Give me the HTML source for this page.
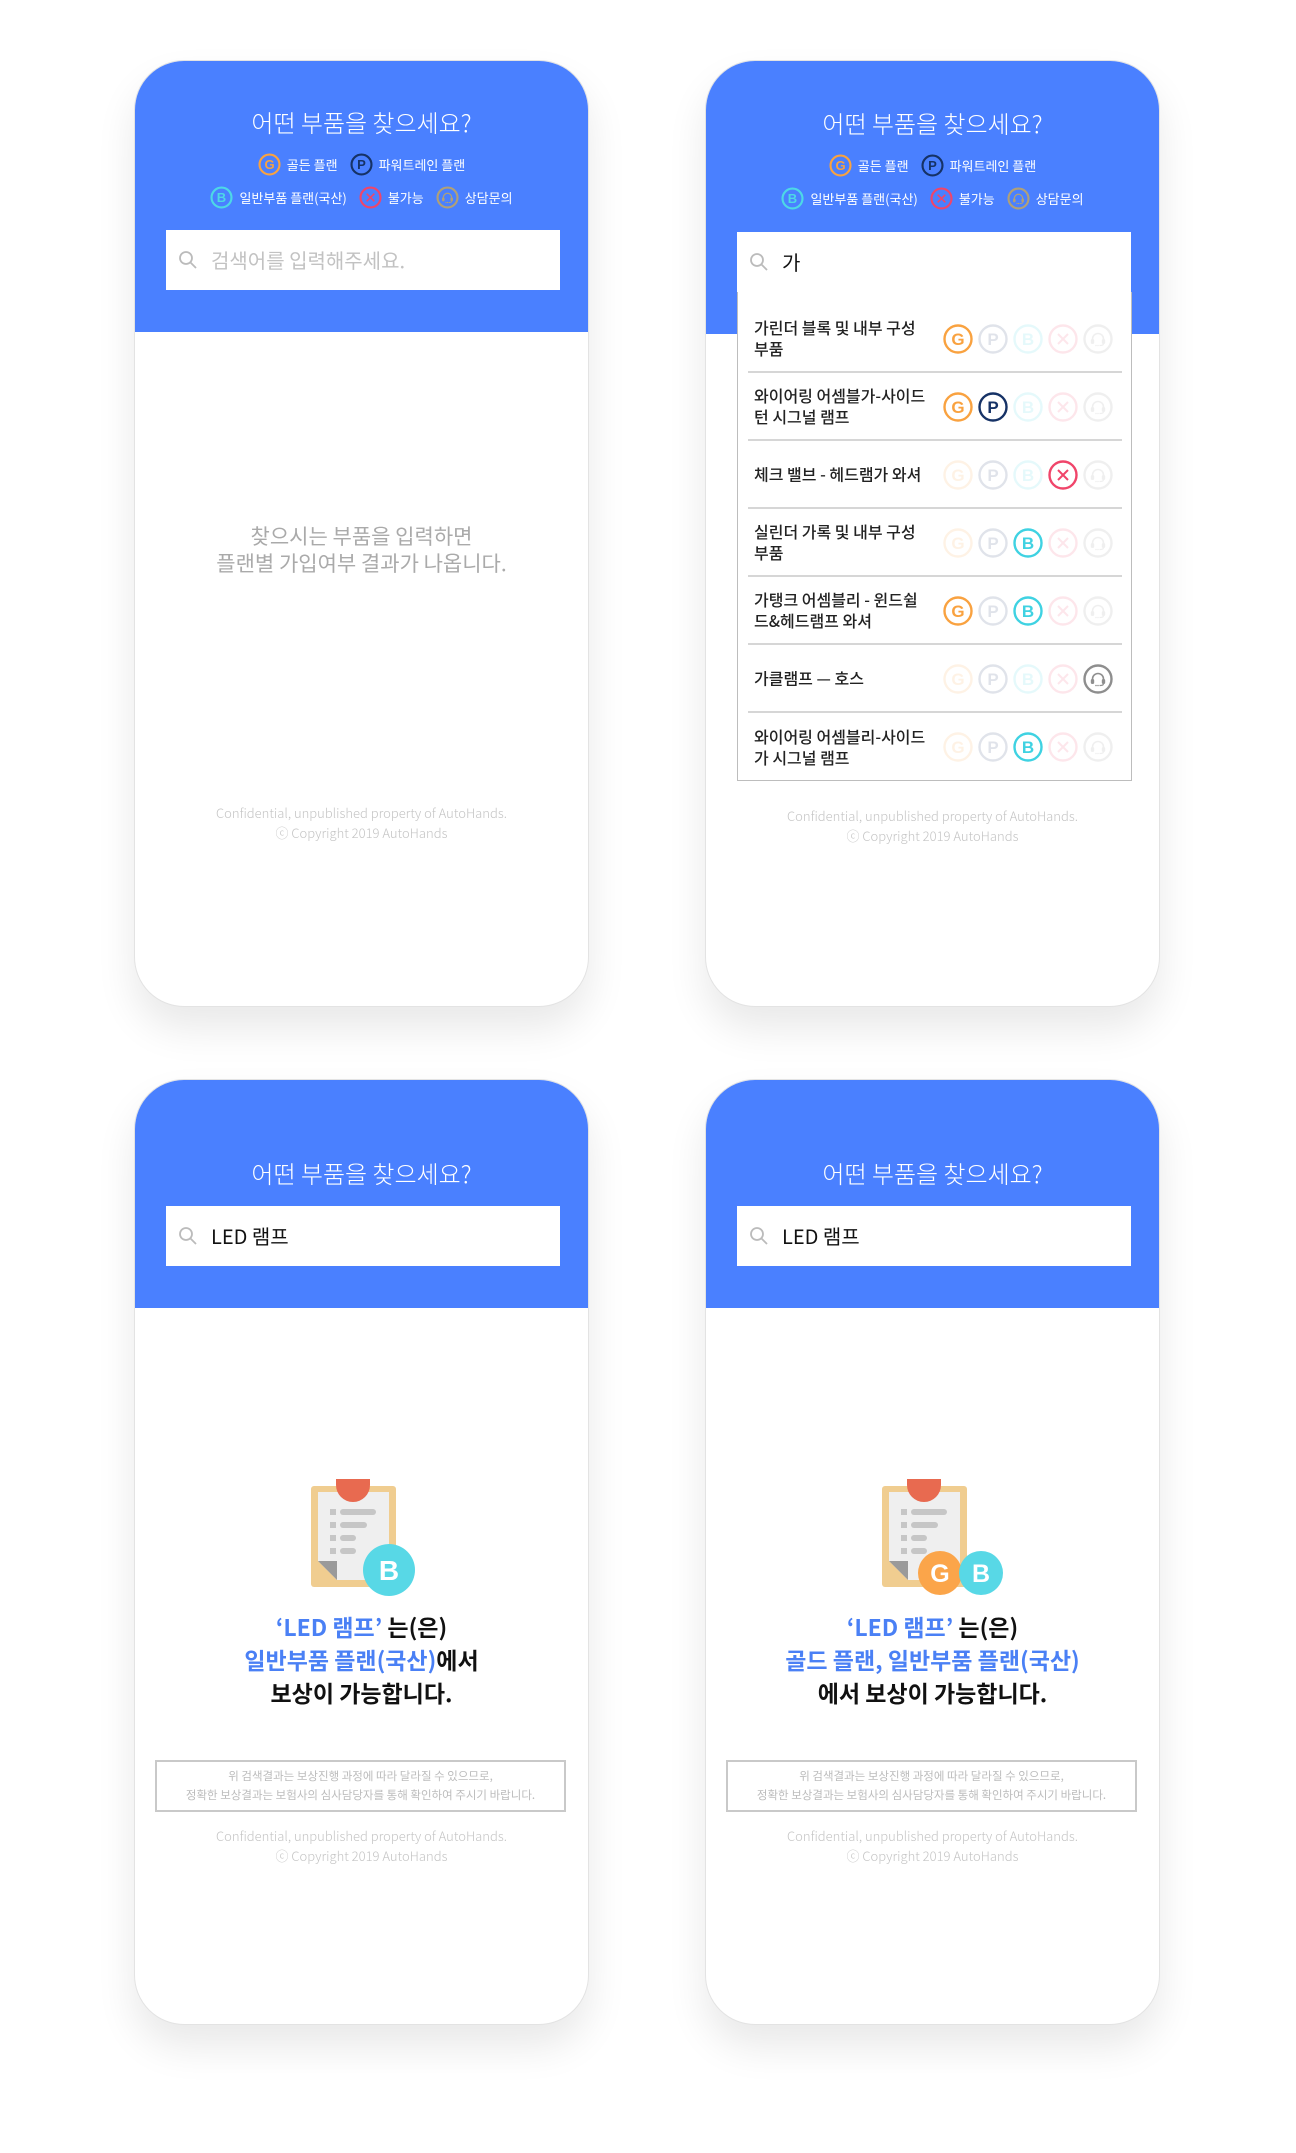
<!DOCTYPE html>
<html><head><meta charset="utf-8">
<style>
*{margin:0;padding:0;box-sizing:border-box}
body{width:1296px;height:2153px;background:#fff;position:relative;overflow:hidden;font-family:"Liberation Sans","Noto Sans CJK KR",sans-serif}
.ph{position:absolute;width:455px;height:947px;border-radius:50px;background:#fff;border:1px solid #e3e3e3;box-shadow:0 22px 40px rgba(0,0,0,0.09);overflow:hidden}
.hd{position:absolute;left:0;top:0;width:100%;background:#4a80ff}
.ttl{position:absolute;left:0;width:100%;text-align:center;color:#fff;font-size:24px;font-weight:300;line-height:30px;font-family:"Noto Sans CJK KR",sans-serif}
.lg{position:absolute;left:0;width:100%;display:flex;justify-content:center;align-items:center;color:#fff;font-size:13px;font-family:"Noto Sans CJK KR",sans-serif;height:24px}
.lg svg{margin-right:6px}
.lg span{margin-right:12px}
.sb{position:absolute;left:31px;width:394px;background:#fff}
.sb svg{position:absolute;left:12px;top:50%;margin-top:-10px}
.sb .t{position:absolute;left:45px;top:0;font-size:20px;font-family:"Noto Sans CJK KR",sans-serif}
.c{position:absolute;left:0;width:100%;text-align:center;font-family:"Noto Sans CJK KR",sans-serif}
.ft{color:#c4c4c4;font-size:13px;line-height:20px;font-weight:300}
.list{position:absolute;left:31px;top:231px;width:395px;height:489px;border:1px solid #bdbdbd;border-top:none;background:#fff}
.row{position:absolute;left:10px;width:374px;height:68px;border-bottom:2px solid #d6d6d6}
.row .l{position:absolute;left:6px;top:50%;transform:translateY(-50%);font-size:16px;line-height:21px;color:#222;font-family:"Noto Sans CJK KR",sans-serif;font-weight:500}
.row .ic{position:absolute;left:195px;top:19px;display:flex}
.row .ic svg{margin-right:5px}
.res{font-size:23px;line-height:33px;font-weight:700;color:#111}
.bl{color:#4a80f5}
.nt{position:absolute;left:20px;width:411px;height:52px;border:2px solid #c9c9c9;text-align:center;color:#bcbcbc;font-size:11.5px;line-height:19px;padding-top:5px;font-family:"Noto Sans CJK KR",sans-serif}
</style></head><body>

<svg width="0" height="0" style="position:absolute">
<defs>
<g id="hs"><path d="M9.5 17v-2a5.5 5.5 0 0 1 11 0v2" fill="none" stroke-width="1.6"/><rect x="8.3" y="15.5" width="2.4" height="4" rx="1"/><rect x="19.3" y="15.5" width="2.4" height="4" rx="1"/><path d="M20.5 19.5q0 2-3 2h-1" fill="none" stroke-width="1.2"/><circle cx="13" cy="21.5" r=".8" stroke="none"/><circle cx="15" cy="21.5" r=".8" stroke="none"/></g>
</defs>
</svg>

<!-- Phone 1 -->
<div class="ph" style="left:134px;top:60px">
 <div class="hd" style="height:271px"></div>
 <div class="ttl" style="top:46px">어떤 부품을 찾으세요?</div>
 <div class="lg" style="top:91px">
  <svg width="23" height="23" viewBox="0 0 30 30"><circle cx="15" cy="15" r="13" fill="none" stroke="#f9a240" stroke-width="2.8"/><text x="15" y="21" text-anchor="middle" font-size="17" font-weight="bold" fill="#f9a240" font-family="Liberation Sans">G</text></svg><span>골든 플랜</span>
  <svg width="23" height="23" viewBox="0 0 30 30"><circle cx="15" cy="15" r="13" fill="none" stroke="#163266" stroke-width="2.8"/><text x="15" y="21" text-anchor="middle" font-size="17" font-weight="bold" fill="#163266" font-family="Liberation Sans">P</text></svg><span style="margin-right:0">파워트레인 플랜</span>
 </div>
 <div class="lg" style="top:124px">
  <svg width="23" height="23" viewBox="0 0 30 30"><circle cx="15" cy="15" r="13" fill="none" stroke="#4dd8e6" stroke-width="2.8"/><text x="15" y="21" text-anchor="middle" font-size="17" font-weight="bold" fill="#4dd8e6" font-family="Liberation Sans">B</text></svg><span>일반부품 플랜(국산)</span>
  <svg width="23" height="23" viewBox="0 0 30 30"><circle cx="15" cy="15" r="13" fill="none" stroke="#f0456a" stroke-width="2.8"/><path d="M10 10L20 20M20 10L10 20" stroke="#f0456a" stroke-width="2"/></svg><span>불가능</span>
  <svg width="23" height="23" viewBox="0 0 30 30"><circle cx="15" cy="15" r="13" fill="none" stroke="#b0a078" stroke-width="2.8"/><use href="#hs" stroke="#b0a078" fill="#b0a078"/></svg><span style="margin-right:0">상담문의</span>
 </div>
 <div class="sb" style="top:169px;height:60px">
  <svg width="20" height="20" viewBox="0 0 20 20"><circle cx="8" cy="8" r="6" fill="none" stroke="#bbb" stroke-width="1.8"/><path d="M12.5 12.5L18 18" stroke="#bbb" stroke-width="1.8"/></svg>
  <div class="t" style="line-height:60px;color:#c2c2c2">검색어를 입력해주세요.</div>
 </div>
 <div class="c" style="top:462px;color:#aaa;font-size:21px;line-height:27px">찾으시는 부품을 입력하면<br>플랜별 가입여부 결과가 나옵니다.</div>
 <div class="c ft" style="top:742px">Confidential, unpublished property of AutoHands.<br>ⓒ Copyright 2019 AutoHands</div>
</div>

<!-- Phone 2 -->
<div class="ph" style="left:705px;top:60px">
 <div class="hd" style="height:273px"></div>
 <div class="ttl" style="top:47px">어떤 부품을 찾으세요?</div>
 <div class="lg" style="top:92px">
  <svg width="23" height="23" viewBox="0 0 30 30"><circle cx="15" cy="15" r="13" fill="none" stroke="#f9a240" stroke-width="2.8"/><text x="15" y="21" text-anchor="middle" font-size="17" font-weight="bold" fill="#f9a240" font-family="Liberation Sans">G</text></svg><span>골든 플랜</span>
  <svg width="23" height="23" viewBox="0 0 30 30"><circle cx="15" cy="15" r="13" fill="none" stroke="#163266" stroke-width="2.8"/><text x="15" y="21" text-anchor="middle" font-size="17" font-weight="bold" fill="#163266" font-family="Liberation Sans">P</text></svg><span style="margin-right:0">파워트레인 플랜</span>
 </div>
 <div class="lg" style="top:125px">
  <svg width="23" height="23" viewBox="0 0 30 30"><circle cx="15" cy="15" r="13" fill="none" stroke="#4dd8e6" stroke-width="2.8"/><text x="15" y="21" text-anchor="middle" font-size="17" font-weight="bold" fill="#4dd8e6" font-family="Liberation Sans">B</text></svg><span>일반부품 플랜(국산)</span>
  <svg width="23" height="23" viewBox="0 0 30 30"><circle cx="15" cy="15" r="13" fill="none" stroke="#f0456a" stroke-width="2.8"/><path d="M10 10L20 20M20 10L10 20" stroke="#f0456a" stroke-width="2"/></svg><span>불가능</span>
  <svg width="23" height="23" viewBox="0 0 30 30"><circle cx="15" cy="15" r="13" fill="none" stroke="#b0a078" stroke-width="2.8"/><use href="#hs" stroke="#b0a078" fill="#b0a078"/></svg><span style="margin-right:0">상담문의</span>
 </div>
 <div class="sb" style="top:171px;height:60px">
  <svg width="20" height="20" viewBox="0 0 20 20"><circle cx="8" cy="8" r="6" fill="none" stroke="#bbb" stroke-width="1.8"/><path d="M12.5 12.5L18 18" stroke="#bbb" stroke-width="1.8"/></svg>
  <div class="t" style="line-height:60px;color:#111">가</div>
 </div>
 <div class="list">
  <div class="row" style="top:13px"><div class="l">가린더 블록 및 내부 구성<br>부품</div><div class="ic" id="r1"></div></div>
  <div class="row" style="top:81px"><div class="l">와이어링 어셈블가-사이드<br>턴 시그널 램프</div><div class="ic" id="r2"></div></div>
  <div class="row" style="top:149px"><div class="l">체크 밸브 - 헤드램가 와셔</div><div class="ic" id="r3"></div></div>
  <div class="row" style="top:217px"><div class="l">실린더 가록 및 내부 구성<br>부품</div><div class="ic" id="r4"></div></div>
  <div class="row" style="top:285px"><div class="l">가탱크 어셈블리 - 윈드쉴<br>드&amp;헤드램프 와셔</div><div class="ic" id="r5"></div></div>
  <div class="row" style="top:353px"><div class="l">가클램프 — 호스</div><div class="ic" id="r6"></div></div>
  <div class="row" style="top:421px;border-bottom:none"><div class="l">와이어링 어셈블리-사이드<br>가 시그널 램프</div><div class="ic" id="r7"></div></div>
 </div>
 <div class="c ft" style="top:745px">Confidential, unpublished property of AutoHands.<br>ⓒ Copyright 2019 AutoHands</div>
</div>

<!-- Phone 3 -->
<div class="ph" style="left:134px;top:1079px;height:946px">
 <div class="hd" style="height:228px"></div>
 <div class="ttl" style="top:78px">어떤 부품을 찾으세요?</div>
 <div class="sb" style="top:126px;height:60px">
  <svg width="20" height="20" viewBox="0 0 20 20"><circle cx="8" cy="8" r="6" fill="none" stroke="#bbb" stroke-width="1.8"/><path d="M12.5 12.5L18 18" stroke="#bbb" stroke-width="1.8"/></svg>
  <div class="t" style="line-height:60px;color:#111">LED 램프</div>
 </div>
 <svg style="position:absolute;left:176px;top:399px" width="112" height="118" viewBox="0 0 112 118">
  <rect x="0" y="7" width="85" height="101" rx="3" fill="#f0cd90"/>
  <path d="M7 13H78V101H26L7 82Z" fill="#efefef"/>
  <path d="M7 82L26 82L26 101Z" fill="#9a9a9a"/>
  <path d="M25 0H59V6A17 17 0 0 1 25 6Z" fill="#e86a50"/>
  <rect x="19" y="30" width="6" height="6" fill="#c6c6c6"/><rect x="29" y="30" width="36" height="6" rx="3" fill="#c6c6c6"/>
  <rect x="19" y="43" width="6" height="6" fill="#c6c6c6"/><rect x="29" y="43" width="27" height="6" rx="3" fill="#c6c6c6"/>
  <rect x="19" y="56" width="6" height="6" fill="#c6c6c6"/><rect x="29" y="56" width="16" height="6" rx="3" fill="#c6c6c6"/>
  <rect x="19" y="69" width="6" height="6" fill="#c6c6c6"/><rect x="29" y="69" width="16" height="6" rx="3" fill="#c6c6c6"/>
  <circle cx="78" cy="91" r="26" fill="#58d8e6"/>
  <text x="78" y="101" text-anchor="middle" font-size="28" font-weight="bold" fill="#fff" font-family="Liberation Sans">B</text>
 </svg>
 <div class="c res" style="top:530px"><span class="bl">‘LED 램프’</span> 는(은)<br><span class="bl">일반부품 플랜(국산)</span>에서<br>보상이 가능합니다.</div>
 <div class="nt" style="top:680px">위 검색결과는 보상진행 과정에 따라 달라질 수 있으므로,<br>정확한 보상결과는 보험사의 심사담당자를 통해 확인하여 주시기 바랍니다.</div>
 <div class="c ft" style="top:746px">Confidential, unpublished property of AutoHands.<br>ⓒ Copyright 2019 AutoHands</div>
</div>

<!-- Phone 4 -->
<div class="ph" style="left:705px;top:1079px;height:946px">
 <div class="hd" style="height:228px"></div>
 <div class="ttl" style="top:78px">어떤 부품을 찾으세요?</div>
 <div class="sb" style="top:126px;height:60px">
  <svg width="20" height="20" viewBox="0 0 20 20"><circle cx="8" cy="8" r="6" fill="none" stroke="#bbb" stroke-width="1.8"/><path d="M12.5 12.5L18 18" stroke="#bbb" stroke-width="1.8"/></svg>
  <div class="t" style="line-height:60px;color:#111">LED 램프</div>
 </div>
 <svg style="position:absolute;left:176px;top:399px" width="130" height="120" viewBox="0 0 130 120">
  <rect x="0" y="7" width="85" height="101" rx="3" fill="#f0cd90"/>
  <path d="M7 13H78V101H26L7 82Z" fill="#efefef"/>
  <path d="M7 82L26 82L26 101Z" fill="#9a9a9a"/>
  <path d="M25 0H59V6A17 17 0 0 1 25 6Z" fill="#e86a50"/>
  <rect x="19" y="30" width="6" height="6" fill="#c6c6c6"/><rect x="29" y="30" width="36" height="6" rx="3" fill="#c6c6c6"/>
  <rect x="19" y="43" width="6" height="6" fill="#c6c6c6"/><rect x="29" y="43" width="27" height="6" rx="3" fill="#c6c6c6"/>
  <rect x="19" y="56" width="6" height="6" fill="#c6c6c6"/><rect x="29" y="56" width="16" height="6" rx="3" fill="#c6c6c6"/>
  <rect x="19" y="69" width="6" height="6" fill="#c6c6c6"/><rect x="29" y="69" width="16" height="6" rx="3" fill="#c6c6c6"/>
  <circle cx="58" cy="94" r="22" fill="#fba54a"/>
  <text x="58" y="103" text-anchor="middle" font-size="25" font-weight="bold" fill="#fff" font-family="Liberation Sans">G</text>
  <circle cx="99" cy="94" r="22" fill="#58d8e6"/>
  <text x="99" y="103" text-anchor="middle" font-size="25" font-weight="bold" fill="#fff" font-family="Liberation Sans">B</text>
 </svg>
 <div class="c res" style="top:530px"><span class="bl">‘LED 램프’</span> 는(은)<br><span class="bl">골드 플랜, 일반부품 플랜(국산)</span><br>에서 보상이 가능합니다.</div>
 <div class="nt" style="top:680px">위 검색결과는 보상진행 과정에 따라 달라질 수 있으므로,<br>정확한 보상결과는 보험사의 심사담당자를 통해 확인하여 주시기 바랍니다.</div>
 <div class="c ft" style="top:746px">Confidential, unpublished property of AutoHands.<br>ⓒ Copyright 2019 AutoHands</div>
</div>

<script>
var C={G:'#f9a240',P:'#163266',B:'#3fd2e2',X:'#f0456a',H:'#8e8e8e'};
function ic(k,on){var c=C[k],o=on?1:0.13,s='<svg width="30" height="30" viewBox="0 0 30 30" style="opacity:'+o+'"><circle cx="15" cy="15" r="13.5" fill="none" stroke="'+c+'" stroke-width="2.4"/>';
if(k=='X')s+='<path d="M10 10L20 20M20 10L10 20" stroke="'+c+'" stroke-width="2"/>';
else if(k=='H')s+='<use href="#hs" stroke="'+c+'" fill="'+c+'"/>';
else s+='<text x="15" y="21" text-anchor="middle" font-size="17" font-weight="bold" fill="'+c+'" font-family="Liberation Sans">'+k+'</text>';
return s+'</svg>';}
var rows=['G','GP','X','B','GB','H','B'];
rows.forEach(function(r,i){var h='';'GPBXH'.split('').forEach(function(k){h+=ic(k,r.indexOf(k)>=0);});document.getElementById('r'+(i+1)).innerHTML=h;});
</script>
</body></html>
